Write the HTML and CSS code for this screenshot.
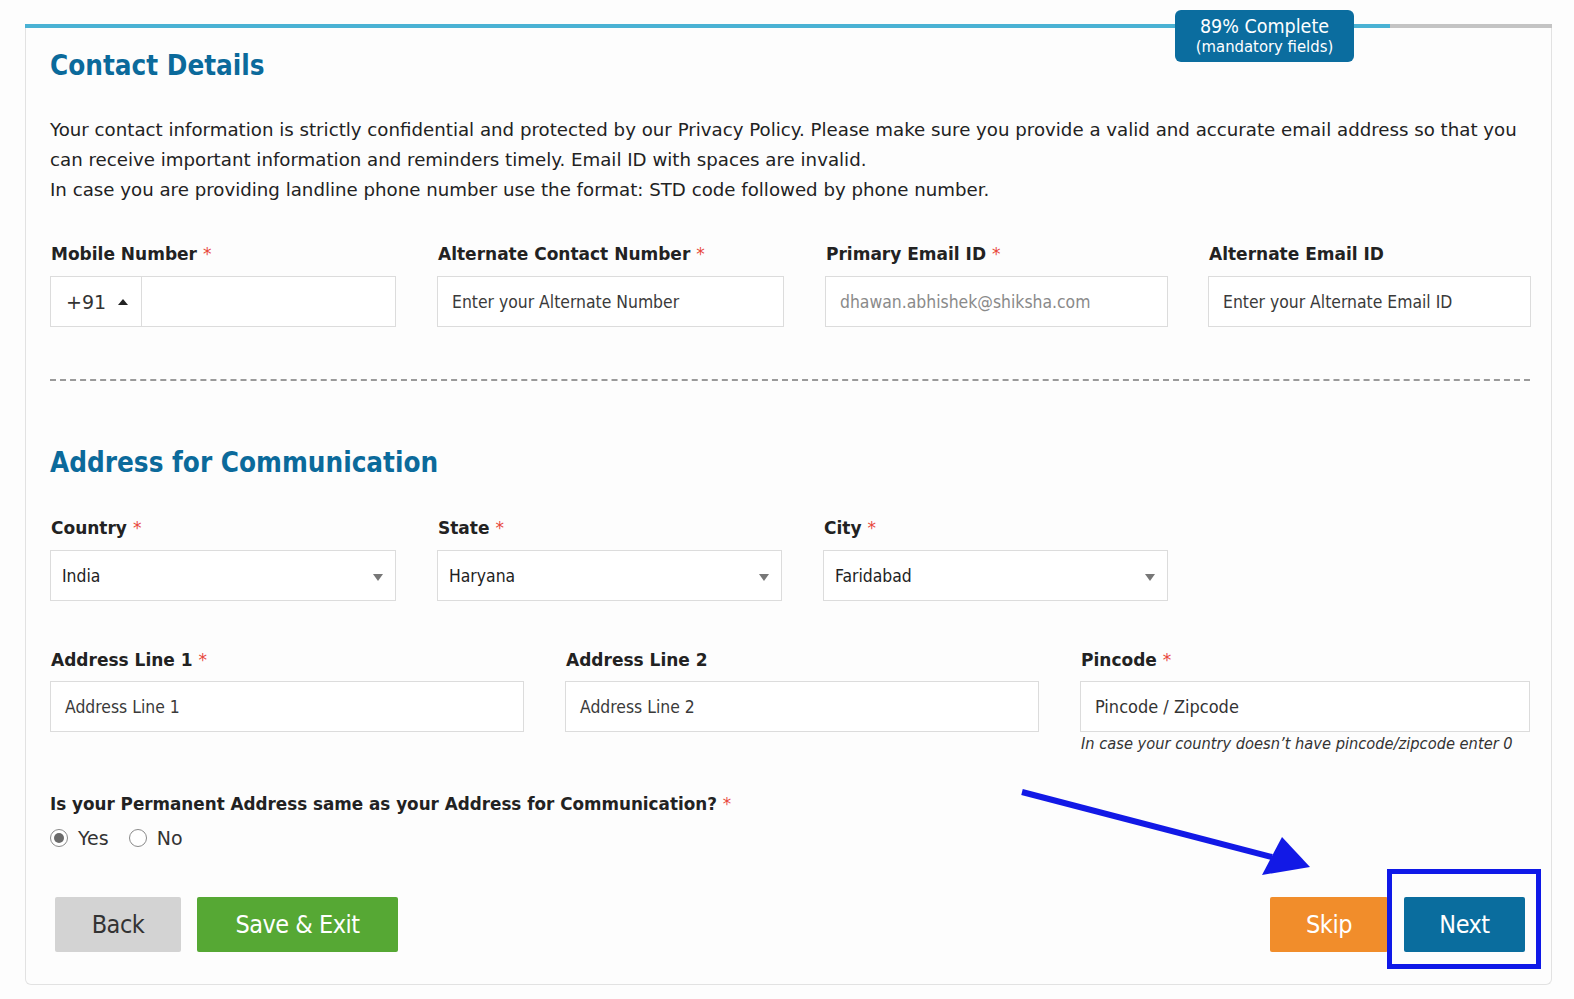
FILE: index.html
```html
<!DOCTYPE html>
<html lang="en">
<head>
<meta charset="utf-8">
<title>Contact Details</title>
<link rel="stylesheet" href="styles.css">
</head>
<body>
<div class="page">
<div class="progress">
  <div class="progress-fill" style="width:1365px"></div>
  <div class="badge"><span class="badge-main">89% Complete</span><span class="badge-sub">(mandatory fields)</span></div>
</div>
<main class="card">
  <h2 class="section-title">Contact Details</h2>
  <p class="intro">Your contact information is strictly confidential and protected by our Privacy Policy. Please make sure you provide a valid and accurate email address so that you can receive important information and reminders timely. Email ID with spaces are invalid.<br>In case you are providing landline phone number use the format: STD code followed by phone number.</p>

  <div class="row row-contact">
    <div class="field">
      <label class="label">Mobile Number <span class="req">*</span></label>
      <div class="input phone">
        <div class="code">+91 <span class="caret-up"></span></div>
        <div class="phone-num"></div>
      </div>
    </div>
    <div class="field">
      <label class="label">Alternate Contact Number <span class="req">*</span></label>
      <div class="input"><span class="ph">Enter your Alternate Number</span></div>
    </div>
    <div class="field">
      <label class="label">Primary Email ID <span class="req">*</span></label>
      <div class="input"><span class="ph ph-light">dhawan.abhishek@shiksha.com</span></div>
    </div>
    <div class="field">
      <label class="label">Alternate Email ID</label>
      <div class="input"><span class="ph">Enter your Alternate Email ID</span></div>
    </div>
  </div>

  <div class="dash"></div>

  <h2 class="section-title title-2">Address for Communication</h2>

  <div class="row row-loc">
    <div class="field">
      <label class="label">Country <span class="req">*</span></label>
      <div class="input select"><span class="val">India</span><span class="caret-down"></span></div>
    </div>
    <div class="field">
      <label class="label">State <span class="req">*</span></label>
      <div class="input select"><span class="val">Haryana</span><span class="caret-down"></span></div>
    </div>
    <div class="field">
      <label class="label">City <span class="req">*</span></label>
      <div class="input select"><span class="val">Faridabad</span><span class="caret-down"></span></div>
    </div>
  </div>

  <div class="row row-addr">
    <div class="field">
      <label class="label">Address Line 1 <span class="req">*</span></label>
      <div class="input"><span class="ph">Address Line 1</span></div>
    </div>
    <div class="field">
      <label class="label">Address Line 2</label>
      <div class="input"><span class="ph">Address Line 2</span></div>
    </div>
    <div class="field">
      <label class="label">Pincode <span class="req">*</span></label>
      <div class="input"><span class="ph ph-pin">Pincode / Zipcode</span></div>
      <div class="hint">In case your country doesn’t have pincode/zipcode enter 0</div>
    </div>
  </div>

  <div class="question">Is your Permanent Address same as your Address for Communication? <span class="req">*</span></div>
  <div class="radios">
    <span class="radio checked"></span><span class="radio-label">Yes</span>
    <span class="radio"></span><span class="radio-label">No</span>
  </div>

  <div class="actions">
    <div class="left-actions">
      <button class="btn btn-back">Back</button>
      <button class="btn btn-save">Save &amp; Exit</button>
    </div>
    <div class="right-actions">
      <button class="btn btn-skip">Skip</button>
      <button class="btn btn-next">Next</button>
    </div>
  </div>
</main>

<div class="highlight-box"></div>
<svg class="arrow" width="320" height="100" viewBox="1000 780 320 100">
  <line x1="1022" y1="792" x2="1272" y2="857" stroke="#1219e6" stroke-width="6"/>
  <polygon points="1310,867 1262,875 1282,837" fill="#1219e6"/>
</svg>
</div>
</body>
</html>
```

FILE: styles.css
```css
* { box-sizing: border-box; }
html, body { margin: 0; padding: 0; }
html { overflow: hidden; }
body {
  background: #fdfdfd;
  font-family: "DejaVu Sans", sans-serif;
  color: #222;
}
.page {
  position: relative;
  padding-top: 24px;
  height: 999px;
  overflow: hidden;
}

.progress {
  position: relative;
  margin-left: 25px;
  width: 1527px;
  height: 4px;
  background: #c4c4c4;
}
.progress-fill {
  height: 4px;
  background: #4ab2d4;
}
.badge {
  position: absolute;
  left: 1150px;
  top: -14px;
  width: 179px;
  height: 52px;
  background: #0b6d9f;
  border-radius: 6px;
  color: #fff;
  display: flex;
  flex-direction: column;
  align-items: center;
  justify-content: center;
  line-height: 1;
  font-family: "DejaVu Sans Condensed", "DejaVu Sans", sans-serif;
}
.badge-main { font-size: 19.5px; }
.badge-sub { font-size: 16.5px; margin-top: 2px; }

.card {
  margin-left: 25px;
  width: 1527px;
  height: 957px;
  border: 1px solid #e2e2e2;
  border-top: none;
  border-radius: 0 0 6px 6px;
  background: #fdfdfd;
  padding: 22px 20px 0 24px;
}

.section-title {
  margin: 0;
  font-family: "DejaVu Sans Condensed", "DejaVu Sans", sans-serif;
  font-size: 27.6px;
  line-height: 32px;
  font-weight: bold;
  color: #0b6a9b;
}
.title-2 { margin-top: 66px; }

.intro {
  margin: 33px 0 0;
  font-size: 18.2px;
  line-height: 30px;
  color: #222;
}

.row { display: grid; }
.row-contact {
  margin-top: 37px;
  grid-template-columns: 346px 347px 343px 322px;
  column-gap: 41px;
}
.row-contact .field:nth-child(4) { margin-left: -1px; }
.row-loc {
  margin-top: 37px;
  grid-template-columns: 346px 345px 345px;
  column-gap: 41px;
}
.row-addr {
  margin-top: 47px;
  grid-template-columns: 474px 474px 450px;
  column-gap: 41px;
}

.label {
  display: block;
  font-weight: bold;
  font-size: 17px;
  line-height: 24px;
  color: #222;
  padding-left: 1px;
}
.req { color: #e8483c; font-weight: normal; }

.input {
  margin-top: 10px;
  height: 51px;
  border: 1px solid #dcdcdc;
  background: #fff;
  display: flex;
  align-items: center;
  padding: 0 14px;
  font-family: "DejaVu Sans Condensed", "DejaVu Sans", sans-serif;
  font-size: 17.4px;
  color: #333;
}
.row-addr .input { margin-top: 9px; }
.ph { color: #3a3a3a; }
.ph-light { color: #8a8a8a; }
.ph-pin { font-size: 18px; color: #333; }

.phone { padding: 0; }
.code {
  width: 91px;
  height: 100%;
  border-right: 1px solid #dcdcdc;
  display: flex;
  align-items: center;
  padding-left: 15px;
  font-family: "DejaVu Sans", sans-serif;
  font-size: 19px;
  color: #333;
  gap: 12px;
}
.caret-up {
  width: 0; height: 0;
  border-left: 5px solid transparent;
  border-right: 5px solid transparent;
  border-bottom: 6px solid #222;
}
.phone-num { flex: 1; }

.select {
  justify-content: space-between;
  padding: 0 12px 0 11px;
}
.val { color: #222; }
.caret-down {
  width: 0; height: 0;
  border-left: 5px solid transparent;
  border-right: 5px solid transparent;
  border-top: 7px solid #777;
  margin-top: 3px;
}

.hint {
  margin-top: 2px;
  font-family: "DejaVu Sans Condensed", "DejaVu Sans", sans-serif;
  font-style: italic;
  font-size: 16.3px;
  line-height: 20px;
  color: #333;
  padding-left: 1px;
}

.dash {
  margin-top: 52px;
  height: 0;
  border-top: 2px dashed #9a9a9a;
  width: 1480px;
}

.question {
  margin-top: 38px;
  font-weight: bold;
  font-size: 16.8px;
  line-height: 24px;
  color: #222;
}
.radios {
  margin-top: 10px;
  display: flex;
  align-items: center;
  height: 24px;
  font-size: 19px;
  color: #333;
}
.radio {
  width: 18px; height: 18px;
  border: 1px solid #8a8a8a;
  border-radius: 50%;
  background: #fff;
  display: inline-flex;
  align-items: center;
  justify-content: center;
}
.radio.checked::after {
  content: "";
  width: 10px; height: 10px;
  border-radius: 50%;
  background: #6a6a6a;
}
.radio-label { margin-left: 10px; margin-right: 20px; }

.actions {
  margin-top: 47px;
  display: flex;
  justify-content: space-between;
  padding: 0 5px;
  width: 1480px;
}
.left-actions, .right-actions { display: flex; gap: 16px; }
.btn {
  height: 55px;
  border: none;
  border-radius: 2px;
  font-family: "DejaVu Sans Condensed", "DejaVu Sans", sans-serif;
  font-size: 25px;
  color: #fff;
  padding: 0;
  letter-spacing: -0.5px;
}
.btn-back { width: 126px; background: #d3d3d3; color: #333; }
.btn-save { width: 201px; background: #56a834; }
.btn-skip { width: 118px; background: #f18d2b; }
.btn-next { width: 121px; background: #0a6d9e; }

.highlight-box {
  position: absolute;
  left: 1387px;
  top: 869px;
  width: 154px;
  height: 100px;
  border: 5px solid #0f19e8;
}
.arrow {
  position: absolute;
  left: 1000px;
  top: 780px;
  pointer-events: none;
}
```
